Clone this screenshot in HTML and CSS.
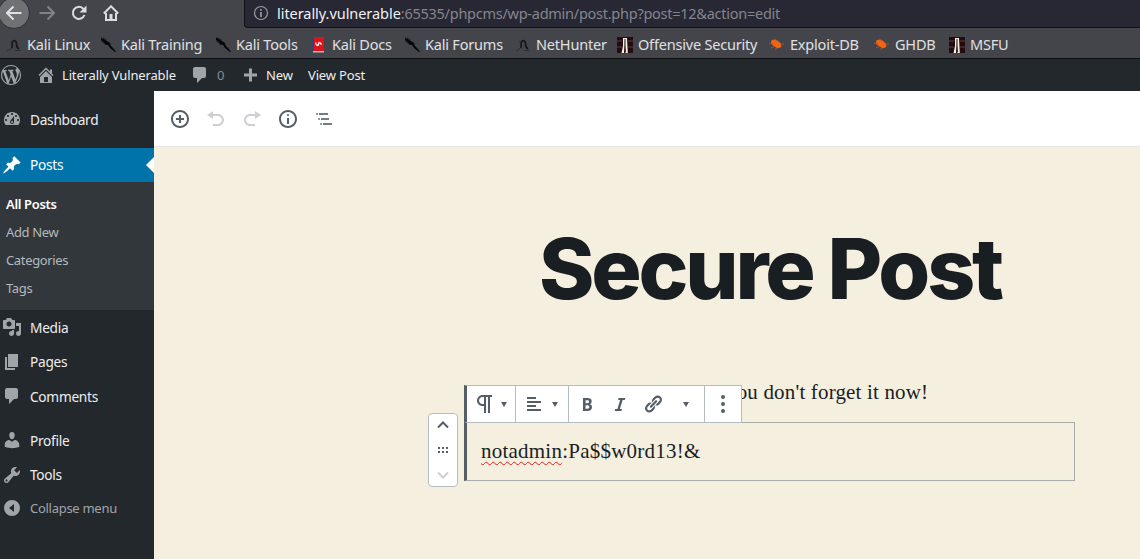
FILE: index.html
```html
<!DOCTYPE html>
<html lang="en">
<head>
<meta charset="utf-8">
<title>Edit Post</title>
<link rel="stylesheet" href="styles.css">
</head>
<body>
<svg class="defs" aria-hidden="true">
  <symbol id="dragon" viewBox="0 0 16 16"><path d="M1 .5L4 2l3 2 3 2 1 3 2 2 3 3.500-1 .5-5-4-2-3-3-.5L3 5 1 3z" fill="#050607"/><path d="M3 .5l4 2.500M1 4l4 3" stroke="#2a2b30"/></symbol>
  <symbol id="hunter" viewBox="0 0 16 16"><path d="M5.500 11c2-1.500-.5-3.500 1-6 1.500-2.500 4-1 4 1.500 0 2 0 4 2.500 5.500" fill="none" stroke="#17191c" stroke-width="1.800"/><path d="M1 14l4-2.500M9 13.500h5.500M4 5l3-1" stroke="#2c2f34"/></symbol>
  <symbol id="offsec" viewBox="0 0 16 16"><path fill="#250b0c" d="M0 0h16v16H0z"/><path d="M0 4h5M11 4h5M0 10h5M11 10h5" stroke="#544044"/><path d="M6 1h4l.8 15H8.500L8 9l-1 7H4.500L6 9z" fill="#f6eee6"/><path d="M7.500 2h1v6l.3 7h-1.500z" fill="#17100f"/></symbol>
  <symbol id="bug" viewBox="0 0 16 16"><path d="M2 5c0-3 4-2.500 7-1 3 2 4 4 3 6-2 2-5 1-7-1-2-1-3-2-3-4z" fill="#f36412"/><path d="M0 6l4 1M2 11l4-2M6 12.500l3-1.500M5 2l4 2M11 7h4" stroke="#b85427" stroke-width=".8"/></symbol>
  <symbol id="comment" viewBox="0 0 20 20"><path d="M5 2h9c1.100 0 2 .9 2 2v7c0 1.100-.9 2-2 2h-2l-5 5v-5H5c-1.100 0-2-.9-2-2V4c0-1.100.9-2 2-2z"/></symbol>
</svg>

<header class="browser">
  <div class="nav">
    <span class="back"><svg viewBox="0 0 16 16" width="16" height="16"><path d="M15.500 8H1M7.500 1.500L1 8l6.500 6.500" class="line"/></svg></span>
    <svg class="forward" viewBox="0 0 16 16" width="16" height="16"><path d="M.5 8H15M8.500 1.500L15 8l-6.500 6.500" class="line"/></svg>
    <svg class="reload" viewBox="0 0 16 16" width="16" height="16"><path d="M13.500 10A6 6 0 1 1 12 3.500L14 6" class="line"/><path d="M15.500.5v7h-7z" fill="currentColor"/></svg>
    <svg class="house" viewBox="0 0 16 16" width="16" height="16"><path d="M.8 8.500L8 1.300l7.200 7.200M3 8v7h10V8" class="line"/><path d="M6.500 9h3v5h-3z" fill="currentColor"/></svg>
    <div class="url"><svg viewBox="0 0 16 16" width="16" height="16"><circle cx="8" cy="8" r="6.500" fill="none" stroke="#9b9ba2" stroke-width="1.200"/><path d="M8 4v1.700M8 7v5" stroke="#9b9ba2" stroke-width="1.700"/></svg><span class="addr"><b>literally.vulnerable</b>:65535/phpcms/wp-admin/post.php?post=12&amp;action=edit</span></div>
  </div>
  <nav class="marks">
    <a class="m1"><svg><use href="#hunter"/></svg>Kali Linux</a>
    <a class="m2"><svg><use href="#dragon"/></svg>Kali Training</a>
    <a class="m3"><svg><use href="#dragon"/></svg>Kali Tools</a>
    <a class="m4"><svg viewBox="0 0 16 16"><path fill="#24477e" d="M1 0h3v15H1z"/><path fill="#e01218" d="M3 0h10v14H3z"/><path fill="#c9b9b9" d="M2 14h11v1.500H2z"/><path d="M5 5.500c-1 3 1.500 3.500 2.500 1.500s3-1.500 2.500 1M8 5l-1 4" fill="none" stroke="#fff" stroke-width="1.200"/></svg>Kali Docs</a>
    <a class="m5"><svg><use href="#dragon"/></svg>Kali Forums</a>
    <a class="m6"><svg><use href="#hunter"/></svg>NetHunter</a>
    <a class="m7"><svg><use href="#offsec"/></svg>Offensive Security</a>
    <a class="m8"><svg><use href="#bug"/></svg>Exploit-DB</a>
    <a class="m9"><svg><use href="#bug"/></svg>GHDB</a>
    <a class="m10"><svg><use href="#offsec"/></svg>MSFU</a>
  </nav>
</header>

<div class="adminbar">
  <svg class="wp" viewBox="0 0 20 20"><path d="M20 10c0-5.510-4.490-10-10-10C4.480 0 0 4.490 0 10c0 5.520 4.480 10 10 10 5.510 0 10-4.480 10-10zM7.780 15.370L4.370 6.220c.55-.02 1.170-.08 1.170-.08.5-.06.44-1.130-.06-1.110 0 0-1.450.11-2.370.11-.18 0-.37 0-.58-.01C4.120 2.690 6.870 1.110 10 1.110c2.330 0 4.450.87 6.050 2.340-.68-.11-1.650.39-1.650 1.580 0 .74.45 1.360.9 2.100.35.61.55 1.360.55 2.460 0 1.490-1.400 5-1.400 5l-3.030-8.370c.54-.02.82-.17.82-.17.5-.05.44-1.250-.06-1.220 0 0-1.440.12-2.380.12-.87 0-2.330-.12-2.330-.12-.5-.03-.56 1.200-.06 1.220l.92.08 1.260 3.410zM17.410 10c.24-.64.74-1.870.43-4.250.7 1.290 1.050 2.710 1.050 4.250 0 3.290-1.730 6.240-4.400 7.780.97-2.590 1.940-5.200 2.920-7.780zM6.100 18.090C3.120 16.650 1.110 13.530 1.110 10c0-1.300.23-2.480.72-3.590C3.250 10.300 4.670 14.200 6.100 18.090zm4.030-6.630l2.580 6.980c-.86.29-1.760.45-2.710.45-.79 0-1.570-.11-2.290-.33.81-2.380 1.620-4.740 2.420-7.100z"/></svg>
  <a class="site"><svg viewBox="0 0 20 20"><path d="M16 8.500l1.530 1.530-1.060 1.060L10 4.600l-6.470 6.490-1.060-1.060L10 2.500l4 4v-2h2v4zm-6-2.460l6 5.990V18H4v-5.970zM12 17v-5H8v5h4z"/></svg>Literally Vulnerable</a>
  <a class="count"><svg><use href="#comment"/></svg><span>0</span></a>
  <a class="new"><svg viewBox="0 0 20 20"><path d="M17 8.500v3h-5v5H9v-5H4v-3h5v-5h3v5h5z"/></svg>New</a>
  <a class="view">View Post</a>
</div>

<div class="main">
  <aside class="side">
    <a class="item dash"><svg viewBox="0 0 20 20"><path fill-rule="evenodd" d="M3.760 16h12.480c1.100-1.370 1.760-3.110 1.760-5 0-4.420-3.580-8-8-8s-8 3.580-8 8c0 1.890.66 3.630 1.760 5zM10 4c.55 0 1 .45 1 1s-.45 1-1 1-1-.45-1-1 .45-1 1-1zM6 6c.55 0 1 .45 1 1s-.45 1-1 1-1-.45-1-1 .45-1 1-1zm8 0c.55 0 1 .45 1 1s-.45 1-1 1-1-.45-1-1 .45-1 1-1zm-5.370 5.550L12 7v6c0 1.100-.9 2-2 2s-2-.9-2-2c0-.57.24-1.080.63-1.450zM4 10c.55 0 1 .45 1 1s-.45 1-1 1-1-.45-1-1 .45-1 1-1zm12 0c.55 0 1 .45 1 1s-.45 1-1 1-1-.45-1-1 .45-1 1-1zm-5 3c0-.55-.45-1-1-1s-1 .45-1 1 .45 1 1 1 1-.45 1-1z"/></svg>Dashboard</a>
    <a class="item current"><svg viewBox="0 0 20 20"><path d="M10.440 3.020l1.820-1.820 6.360 6.350-1.830 1.820c-1.050-.68-2.480-.57-3.410.36l-.75.75c-.92.93-1.040 2.350-.35 3.410l-1.830 1.820-2.410-2.410-2.800 2.790c-.42.42-3.380 2.710-3.800 2.290s1.860-3.390 2.280-3.810l2.790-2.790L4.100 9.360l1.830-1.820c1.050.69 2.480.57 3.400-.36l.75-.75c.93-.92 1.050-2.350.36-3.410z"/></svg>Posts<i class="notch"></i></a>
    <div class="sub"><a class="on">All Posts</a><a>Add New</a><a>Categories</a><a>Tags</a></div>
    <a class="item"><svg viewBox="0 0 20 20"><path d="M13 11V4c0-.55-.45-1-1-1h-1.670L9 1H5L3.670 3H2c-.55 0-1 .45-1 1v7c0 .55.45 1 1 1h10c.55 0 1-.45 1-1zM7 4.500c1.380 0 2.500 1.120 2.500 2.500S8.380 9.500 7 9.500 4.500 8.380 4.500 7 5.620 4.500 7 4.500zM14 6h5v10.500c0 1.380-1.120 2.500-2.500 2.500S14 17.880 14 16.500s1.120-2.500 2.500-2.500c.17 0 .34.02.5.05V9h-3V6zm-4 8.050V13h2v3.500c0 1.380-1.120 2.500-2.500 2.500S7 17.880 7 16.500 8.120 14 9.500 14c.17 0 .34.02.5.05z" fill-rule="evenodd"/></svg>Media</a>
    <a class="item"><svg viewBox="0 0 20 20"><path d="M6 15V2h10v13H6zm-1 1h8v2H3V5h2v11z"/></svg>Pages</a>
    <a class="item"><svg><use href="#comment"/></svg>Comments</a>
    <a class="item gap"><svg viewBox="0 0 20 20"><path d="M10 9.250c-2.270 0-2.730-3.440-2.730-3.440C7 4.020 7.820 2 9.970 2c2.160 0 2.980 2.020 2.710 3.810 0 0-.41 3.440-2.680 3.440zm0 2.570L12.720 10c2.390 0 4.520 2.330 4.520 4.530v2.490s-3.650 1.130-7.240 1.130c-3.650 0-7.240-1.130-7.240-1.130v-2.490c0-2.250 1.940-4.480 4.470-4.480z"/></svg>Profile</a>
    <a class="item"><svg viewBox="0 0 20 20"><path fill-rule="evenodd" d="M16.680 9.770c-1.340 1.340-3.300 1.670-4.950.99l-5.410 6.520c-.99.99-2.590.99-3.580 0s-.99-2.590 0-3.570l6.520-5.420c-.68-1.650-.35-3.610.99-4.950 1.280-1.280 3.120-1.620 4.720-1.060l-2.890 2.890 2.820 2.820 2.860-2.870c.53 1.580.18 3.390-1.080 4.650zM3.810 16.210c.4.39 1.040.39 1.430 0 .4-.4.4-1.040 0-1.430-.39-.4-1.030-.4-1.430 0-.39.39-.39 1.030 0 1.430z"/></svg>Tools</a>
    <a class="item collapse"><svg viewBox="0 0 20 20"><path fill-rule="evenodd" d="M10 2a8 8 0 1 0 0 16 8 8 0 0 0 0-16zM12 6v8l-5-4z"/></svg>Collapse menu</a>
  </aside>

  <section class="editor">
    <div class="tools">
      <svg viewBox="0 0 20 20"><path d="M10 1c-5 0-9 4-9 9s4 9 9 9 9-4 9-9-4-9-9-9zm0 16c-3.900 0-7-3.100-7-7s3.100-7 7-7 7 3.100 7 7-3.100 7-7 7zm1-11H9v3H6v2h3v3h2v-3h3V9h-3V6z"/></svg>
      <svg class="off" viewBox="0 0 20 20"><path d="M12 5H7V2L1 6l6 4V7h5c2.200 0 4 1.800 4 4s-1.800 4-4 4H7v2h5c3.300 0 6-2.700 6-6s-2.700-6-6-6z"/></svg>
      <svg class="off" viewBox="0 0 20 20"><path d="M8 5h5V2l6 4-6 4V7H8c-2.200 0-4 1.800-4 4s1.800 4 4 4h5v2H8c-3.300 0-6-2.700-6-6s2.700-6 6-6z"/></svg>
      <svg viewBox="0 0 20 20"><path d="M9 15h2V9H9v6zm1-10c-.5 0-1 .5-1 1s.5 1 1 1 1-.5 1-1-.5-1-1-1zm0-4c-5 0-9 4-9 9s4 9 9 9 9-4 9-9-4-9-9-9zm0 16c-3.900 0-7-3.100-7-7s3.100-7 7-7 7 3.100 7 7-3.100 7-7 7z"/></svg>
      <svg class="outline" viewBox="0 0 20 20"><path d="M2.300 4h1.500v2H2.300zM5 4h9v2H5zM4.300 9h1.500v2H4.300zM7 9h8v2H7zM6.300 14h1.500v2H6.300zM9 14h9v2H9z"/></svg>
    </div>
    <div class="canvas">
      <h1>Secure Post</h1>
      <div class="blocks">
        <p class="first">you don't forget it now!</p>
        <div class="block"><p><span class="typo">notadmin</span>:Pa$$w0rd13!&amp;</p>
          <div class="toolbar">
            <div class="cell c1"><svg viewBox="0 0 24 24" width="24" height="24"><path fill-rule="evenodd" d="M11 5v7H9.500C7.600 12 6 10.400 6 8.500S7.600 5 9.500 5H11m8-2H9.500C6.500 3 4 5.500 4 8.500S6.500 14 9.500 14H11v7h2V5h2v16h2V5h2V3z"/></svg><i class="caret"></i></div>
            <div class="cell c2"><svg viewBox="0 0 20 20" width="20" height="20"><path d="M12 5V3H3v2h9zm5 4V7H3v2h14zm-5 4v-2H3v2h9zm5 4v-2H3v2h14z"/></svg><i class="caret"></i></div>
            <div class="cell c3">
              <svg viewBox="0 0 20 20" width="20" height="20"><path fill-rule="evenodd" d="M6 4v13h4.540c1.370 0 2.460-.33 3.260-1 .8-.66 1.200-1.580 1.200-2.770 0-.84-.17-1.510-.51-2.010s-.9-.85-1.670-1.030v-.09c.57-.1 1.020-.4 1.360-.9s.51-1.130.51-1.910c0-1.140-.39-1.980-1.170-2.500C12.750 4.260 11.500 4 9.780 4H6zm2.570 5.150V6.260h1.360c.73 0 1.270.11 1.610.32.34.22.51.58.51 1.070 0 .54-.16.92-.47 1.150s-.82.35-1.510.35h-1.500zm0 2.190h1.600c1.440 0 2.160.53 2.160 1.610 0 .6-.17 1.050-.51 1.340s-.86.43-1.570.43H8.570v-3.380z"/></svg>
              <svg viewBox="0 0 20 20" width="20" height="20"><path d="M14.780 6h-2.130l-2.800 9h2.120l-.62 2H4.600l.62-2h2.140l2.800-9H8.030l.62-2h6.750z"/></svg>
              <svg viewBox="0 0 20 20" width="20" height="20"><path d="M17.740 2.760c1.680 1.690 1.680 4.410 0 6.100l-1.530 1.520c-1.120 1.120-2.700 1.470-4.140 1.090l2.620-2.610.76-.77.76-.76c.84-.84.84-2.200 0-3.040-.84-.85-2.200-.85-3.040 0l-.77.76-3.380 3.380c-.37-1.440-.02-3.020 1.100-4.140l1.520-1.530c1.690-1.680 4.420-1.680 6.100 0zM8.590 13.430l5.340-5.340c.42-.42.42-1.100 0-1.520-.44-.43-1.130-.39-1.530 0l-5.330 5.340c-.42.42-.42 1.100 0 1.520.44.43 1.130.39 1.520 0zm-.76 2.290l4.140-4.150c.38 1.440.03 3.020-1.090 4.140l-1.520 1.530c-1.690 1.680-4.410 1.680-6.100 0-1.680-1.680-1.680-4.420 0-6.100l1.530-1.520c1.120-1.120 2.700-1.470 4.140-1.100l-4.140 4.150c-.85.84-.85 2.200 0 3.050.84.84 2.200.84 3.040 0z"/></svg>
              <i class="caret"></i>
            </div>
            <div class="cell c4"><svg viewBox="0 0 20 20" width="20" height="20"><circle cx="10" cy="3" r="2"/><circle cx="10" cy="10" r="2"/><circle cx="10" cy="17" r="2"/></svg></div>
          </div>
          <div class="mover">
            <svg viewBox="0 0 12 8" width="12" height="8"><path d="M1 6.500l5-5 5 5" class="line"/></svg>
            <svg viewBox="0 0 12 8" width="12" height="8"><path d="M1 1h2v2H1zM5 1h2v2H5zM9 1h2v2H9zM1 5h2v2H1zM5 5h2v2H5zM9 5h2v2H9z"/></svg>
            <svg class="off" viewBox="0 0 12 8" width="12" height="8"><path d="M1 1.500l5 5 5-5" class="line"/></svg>
          </div>
        </div>
      </div>
    </div>
  </section>
</div>
</body>
</html>
```
FILE: styles.css
```css
* { box-sizing: border-box; }
body { margin: 0; width: 1140px; height: 559px; overflow: hidden; font-family: "Noto Sans", sans-serif; background: #23282d; display: flex; flex-direction: column; }
svg { display: block; flex: none; fill: currentColor; }
p, h1 { margin: 0; }
.defs { position: absolute; width: 0; height: 0; }
.line { fill: none; stroke: currentColor; stroke-width: 2; }

.browser { height: 59px; flex: none; background: #44454b; border-bottom: 1px solid #0e0f12; color: #e0e0e2; }
.nav { height: 28px; display: flex; align-items: flex-start; }
.nav > svg { margin-top: 5px; }
.back { width: 32px; height: 32px; margin: -3px 0 0 -2px; border-radius: 50%; background: #707175; border: 1px solid #2e2f34; display: flex; align-items: center; justify-content: center; flex: none; }
.forward { margin-left: 9px; color: #818286; }
.reload { margin-left: 16px; color: #dcdcde; }
.house { margin-left: 16px; color: #dcdcde; }
.url { margin-left: 125px; flex: 1; height: 28px; background: #272833; border: solid #101116; border-width: 0 0 1px 1px; border-bottom-left-radius: 4px; display: flex; align-items: center; padding-left: 8px; font-size: 14.500px; color: #85858e; white-space: nowrap; }
.url svg { margin-top: -1px; }
.addr { margin: -2px 0 0 8px; letter-spacing: -.26px; }
.addr b { color: #f1f1f4; font-weight: 400; letter-spacing: -.05px; }
.marks { display: flex; height: 30px; padding-left: 6px; font-size: 14.500px; letter-spacing: -.2px; white-space: nowrap; }
.marks a { display: flex; align-items: center; gap: 5px; height: 32px; flex: none; }
.marks svg { width: 16px; height: 16px; margin-top: 2px; }
.m1 { width: 94px; } .m2 { width: 115px; } .m3 { width: 96px; } .m4 { width: 93px; } .m5 { width: 111px; }
.m6 { width: 102px; } .m7 { width: 152px; } .m8 { width: 105px; } .m9 { width: 75px; } .m10 { width: 70px; }

.adminbar { height: 32px; flex: none; display: flex; align-items: center; color: #a0a5aa; font-size: 13px; letter-spacing: -.15px; white-space: nowrap; }
.adminbar a { display: flex; align-items: center; color: #eee; flex: none; }
.adminbar svg { width: 20px; height: 20px; color: #a0a5aa; }
.wp { margin-left: 1px; }
.site { width: 154px; margin-left: 15px; }
.site svg, .new svg { margin-right: 6px; }
.count { width: 50px; }
.count span { color: #868b90; }
.count svg { margin-right: 7px; }
.new { width: 68px; }

.main { flex: 1; display: flex; min-height: 0; }
.side { width: 154px; flex: none; padding-top: 11px; font-size: 13.700px; letter-spacing: -.28px; color: #eee; }
.item { display: flex; align-items: center; height: 34.300px; padding-left: 2px; gap: 8px; position: relative; }
.item svg { width: 20px; height: 20px; color: #a0a5aa; }
.dash { margin-bottom: 12px; }
.current { height: 34px; padding-bottom: 1px; background: #0073aa; color: #fff; }
.current svg { color: #fff; }
.notch { position: absolute; right: 0; top: 9px; border: 8px solid transparent; border-right-color: #fff; border-left: 0; }
.sub { background: #32373c; padding: 8px 0 8px 6px; font-size: 13px; letter-spacing: -.35px; color: #b4b9be; }
.sub a { display: block; height: 28px; line-height: 28px; }
.sub .on { color: #fff; font-weight: 600; }
.gap { margin-top: 10px; }
.collapse { margin-top: -1px; font-size: 13px; color: #a0a5aa; }

.editor { flex: 1; display: flex; flex-direction: column; }
.tools { height: 56px; flex: none; background: #fff; border-bottom: 1px solid #e2e4e7; padding-left: 16px; display: flex; align-items: center; gap: 16px; color: #555d66; }
.tools svg { width: 20px; height: 20px; }
.tools .outline { color: #747b82; }
.tools .off { color: #cdcfd2; }
.canvas { flex: 1; background: #f5efe0; color: #191e23; }
h1 { padding: 69px 0 0 385px; font: 800 84px/106px Inter, sans-serif; letter-spacing: -3.200px; white-space: nowrap; }
.blocks { font: 21px/30px "Liberation Serif", serif; padding: 55px 0 0 310px; white-space: nowrap; }
.first { padding-left: 262px; letter-spacing: .17px; }
.block { position: relative; width: 611px; height: 59px; margin-top: 15px; border: 1px solid #a8adab; border-left: 3px solid #555d66; padding: 13px 14px; letter-spacing: .23px; }
.typo { text-decoration: underline wavy #e02020 1px; text-underline-offset: 3px; text-decoration-skip-ink: none; }
.toolbar { position: absolute; left: -3px; top: -38px; height: 38px; width: 278px; display: flex; background: #fff; border: 1px solid #b5bcc2; border-left: 3px solid #555d66; color: #555d66; }
.cell { display: flex; align-items: center; border-right: 1px solid #b5bcc2; flex: none; }
.cell:last-child { border-right: 0; }
.c1 { width: 49px; padding-left: 6px; gap: 4px; }
.c2 { width: 53px; padding-left: 8px; gap: 8px; }
.c3 { width: 136px; padding-left: 8px; gap: 13px; }
.c3 .caret { margin-left: 7px; }
.c4 { width: 36px; justify-content: center; }
.caret { border: 3px solid transparent; border-top: 5px solid #555d66; border-bottom: 0; }
.mover { position: absolute; left: -39px; top: -10px; width: 30px; height: 74px; background: #fff; border: 1px solid #b5bcc2; border-radius: 4px; display: flex; flex-direction: column; align-items: center; justify-content: space-between; padding: 7px 0; color: #555d66; }
.mover .off { color: #cdcfd2; }
```
